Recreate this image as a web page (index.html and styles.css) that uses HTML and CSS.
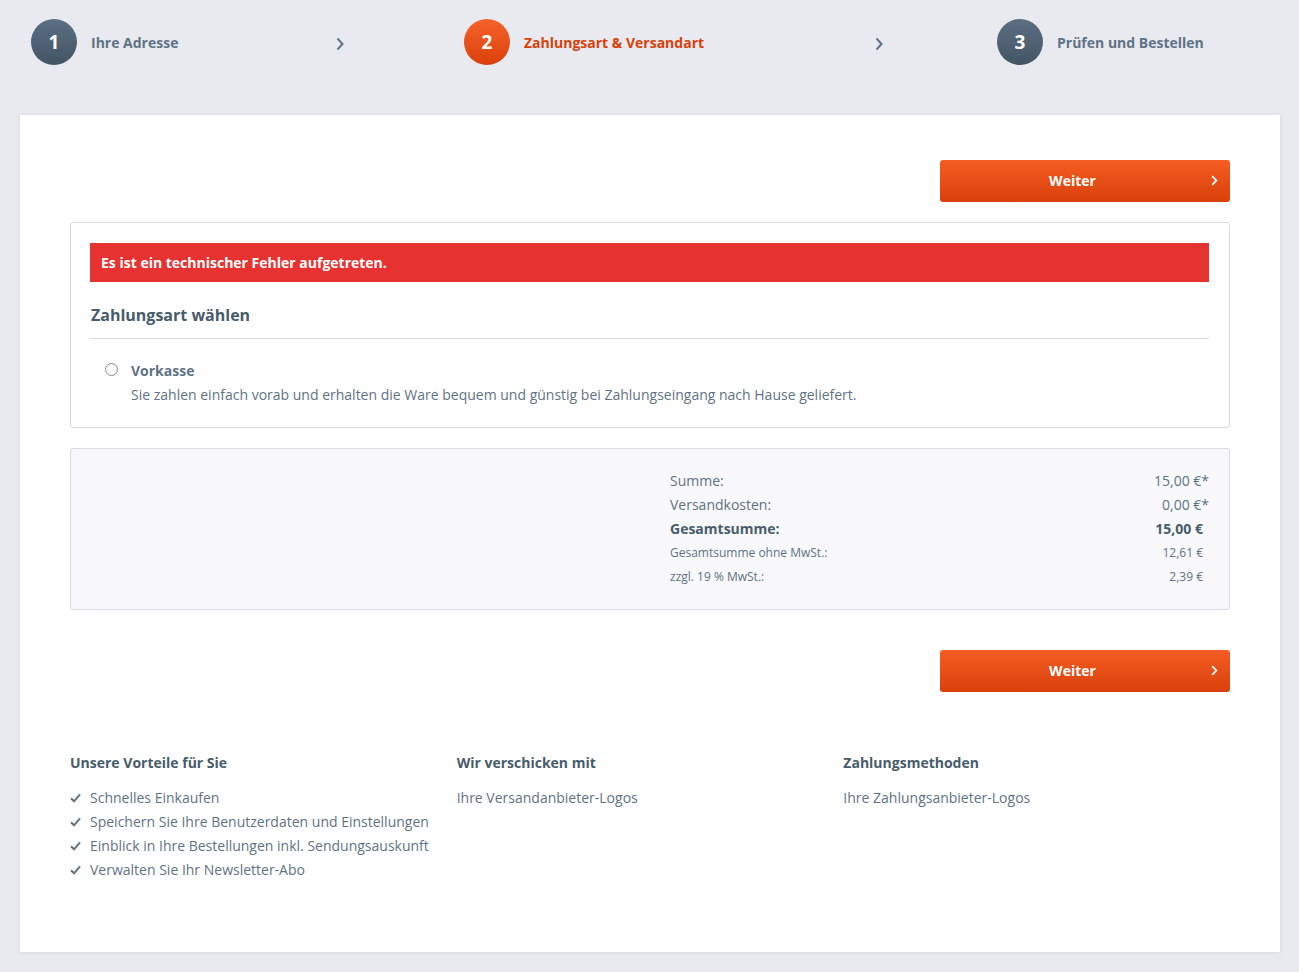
FILE: index.html
```html
<!DOCTYPE html>
<html lang="de">
<head>
<meta charset="utf-8">
<title>Zahlungsart &amp; Versandart</title>
<link rel="stylesheet" href="styles.css">
</head>
<body>
<div class="page">
  <nav class="steps">
    <div class="step step-first">
      <span class="step-counter">1</span>
      <span class="step-label">Ihre Adresse</span>
      <svg class="step-arrow step-arrow-first" width="8" height="14" viewBox="0 0 8 14"><path d="M1.5 1.5 L6.5 7 L1.5 12.5" fill="none" stroke="#5f7285" stroke-width="2"/></svg>
    </div>
    <div class="step step-second step-active">
      <span class="step-counter">2</span>
      <span class="step-label">Zahlungsart &amp; Versandart</span>
      <svg class="step-arrow step-arrow-second" width="8" height="14" viewBox="0 0 8 14"><path d="M1.5 1.5 L6.5 7 L1.5 12.5" fill="none" stroke="#5f7285" stroke-width="2"/></svg>
    </div>
    <div class="step">
      <span class="step-counter">3</span>
      <span class="step-label">Prüfen und Bestellen</span>
    </div>
  </nav>

  <main class="card">
    <div class="actions">
      <button class="btn-primary" type="button">
        <span class="btn-text">Weiter</span>
        <span class="btn-icon"><svg width="7" height="11" viewBox="0 0 7 11"><path d="M1.2 1.2 L5.3 5.5 L1.2 9.8" fill="none" stroke="#fff" stroke-width="1.8"/></svg></span>
      </button>
    </div>

    <section class="panel">
      <div class="alert-error">Es ist ein technischer Fehler aufgetreten.</div>
      <h2 class="panel-title">Zahlungsart wählen</h2>
      <div class="payment-method">
        <input class="radio" type="radio" name="payment" id="vorkasse">
        <div class="payment-body">
          <label class="payment-name" for="vorkasse">Vorkasse</label>
          <p class="payment-desc">Sie zahlen einfach vorab und erhalten die Ware bequem und günstig bei Zahlungseingang nach Hause geliefert.</p>
        </div>
      </div>
    </section>

    <section class="summary">
      <ul class="summary-list">
        <li class="summary-row"><span>Summe:</span><span>15,00&nbsp;€*</span></li>
        <li class="summary-row"><span>Versandkosten:</span><span>0,00&nbsp;€*</span></li>
        <li class="summary-row summary-total"><span>Gesamtsumme:</span><span class="no-star">15,00&nbsp;€</span></li>
        <li class="summary-row summary-small"><span>Gesamtsumme ohne MwSt.:</span><span class="no-star">12,61&nbsp;€</span></li>
        <li class="summary-row summary-small"><span>zzgl. 19 % MwSt.:</span><span class="no-star">2,39&nbsp;€</span></li>
      </ul>
    </section>

    <div class="actions actions-bottom">
      <button class="btn-primary" type="button">
        <span class="btn-text">Weiter</span>
        <span class="btn-icon"><svg width="7" height="11" viewBox="0 0 7 11"><path d="M1.2 1.2 L5.3 5.5 L1.2 9.8" fill="none" stroke="#fff" stroke-width="1.8"/></svg></span>
      </button>
    </div>

    <footer class="benefits">
      <div class="benefit-col">
        <h3 class="benefit-title">Unsere Vorteile für Sie</h3>
        <ul class="check-list">
          <li><svg class="check" width="11" height="10" viewBox="0 0 11 10"><path d="M1 5.3 L4 8.3 L10 1.3" fill="none" stroke="#5f7285" stroke-width="2"/></svg>Schnelles Einkaufen</li>
          <li><svg class="check" width="11" height="10" viewBox="0 0 11 10"><path d="M1 5.3 L4 8.3 L10 1.3" fill="none" stroke="#5f7285" stroke-width="2"/></svg>Speichern Sie Ihre Benutzerdaten und Einstellungen</li>
          <li><svg class="check" width="11" height="10" viewBox="0 0 11 10"><path d="M1 5.3 L4 8.3 L10 1.3" fill="none" stroke="#5f7285" stroke-width="2"/></svg>Einblick in Ihre Bestellungen inkl. Sendungsauskunft</li>
          <li><svg class="check" width="11" height="10" viewBox="0 0 11 10"><path d="M1 5.3 L4 8.3 L10 1.3" fill="none" stroke="#5f7285" stroke-width="2"/></svg>Verwalten Sie Ihr Newsletter-Abo</li>
        </ul>
      </div>
      <div class="benefit-col">
        <h3 class="benefit-title">Wir verschicken mit</h3>
        <p class="benefit-text">Ihre Versandanbieter-Logos</p>
      </div>
      <div class="benefit-col">
        <h3 class="benefit-title">Zahlungsmethoden</h3>
        <p class="benefit-text">Ihre Zahlungsanbieter-Logos</p>
      </div>
    </footer>
  </main>
</div>
</body>
</html>
```

FILE: styles.css
```css
* { box-sizing: border-box; }

html, body {
  margin: 0;
  padding: 0;
}

body {
  background: #e9eaef;
  font-family: "Open Sans", "Liberation Sans", sans-serif;
  font-size: 14px;
  line-height: 24px;
  color: #5f7285;
}

.page {
  padding: 0 19px 19px 20px;
}

/* Steps */
.steps {
  display: flex;
  align-items: center;
  height: 115px;
  padding: 0 0 31px 11px;
}

.step {
  display: flex;
  align-items: center;
}

.step-first { width: 433px; }
.step-second { width: 533px; }

.step-counter {
  width: 46px;
  height: 46px;
  border-radius: 50%;
  background: linear-gradient(#5c6f83, #435464);
  color: #fff;
  font-weight: 700;
  font-size: 19px;
  display: flex;
  align-items: center;
  justify-content: center;
  flex-shrink: 0;
}

.step-label {
  margin: 2px 0 0 14px;
  font-weight: 700;
  font-size: 14px;
  color: #5f7285;
}

.step-active .step-counter {
  background: linear-gradient(#f6622a, #d9400b);
}

.step-active .step-label {
  color: #d9400b;
}

.step-arrow {
  margin-left: auto;
  margin-top: 3px;
}

.step-arrow-first { margin-right: 120px; }
.step-arrow-second { margin-right: 114px; }

/* Card */
.card {
  background: #fff;
  box-shadow: 0 0 4px rgba(80, 90, 130, 0.14);
  padding: 45px 50px 70px 50px;
}

.actions {
  display: flex;
  justify-content: flex-end;
}

.actions-bottom {
  margin-top: 40px;
}

.btn-primary {
  width: 290px;
  height: 42px;
  border: 0;
  border-radius: 3px;
  background: linear-gradient(#f45d23, #d9400b);
  color: #fff;
  font-family: inherit;
  font-weight: 700;
  font-size: 14px;
  line-height: 20px;
  display: flex;
  align-items: center;
  padding: 0 0 1px 11px;
  cursor: pointer;
}

.btn-text {
  flex: 1;
  text-align: center;
}

.btn-icon {
  width: 36px;
  display: flex;
  justify-content: flex-end;
  padding-right: 12px;
}

/* Panel */
.panel {
  margin-top: 20px;
  border: 1px solid #dadae5;
  border-radius: 3px;
  padding: 20px 20px 20px 19px;
}

.alert-error {
  background: #e73232;
  color: #fff;
  font-weight: 700;
  height: 39px;
  line-height: 39px;
  padding-left: 11px;
}

.panel-title {
  margin: 21px 0 0 0;
  font-size: 16px;
  font-weight: 700;
  line-height: 24px;
  color: #475c6a;
  padding: 0 0 11px 1px;
  border-bottom: 1px solid #dadae5;
}

.payment-method {
  display: flex;
  margin-top: 20px;
  padding-left: 15px;
}

.radio {
  appearance: none;
  -webkit-appearance: none;
  width: 13px;
  height: 13px;
  border: 1px solid #8a8a8a;
  border-radius: 50%;
  background: #fff;
  margin: 4px 13px 0 0;
  flex-shrink: 0;
}

.payment-name {
  display: block;
  font-weight: 700;
  color: #5f7285;
}

.payment-desc {
  margin: 0;
}

/* Summary */
.summary {
  margin-top: 20px;
  background: #f8f8fa;
  border: 1px solid #dadae5;
  border-radius: 3px;
  padding: 20px 20px 20px 0;
  display: flex;
  justify-content: flex-end;
}

.summary-list {
  list-style: none;
  margin: 0;
  padding: 0;
  width: 539px;
}

.summary-row {
  display: flex;
  justify-content: space-between;
  height: 24px;
  line-height: 24px;
}

.summary-total {
  font-weight: 700;
  color: #475c6a;
}

.summary-small {
  font-size: 12px;
}

.no-star {
  padding-right: 6px;
}

/* Benefits */
.benefits {
  margin-top: 59px;
  display: grid;
  grid-template-columns: repeat(3, 1fr);
}

.benefit-title {
  margin: 0;
  font-size: 14px;
  font-weight: 700;
  line-height: 24px;
  color: #475c6a;
}

.benefit-text {
  margin: 11px 0 0 0;
}

.check-list {
  list-style: none;
  margin: 11px 0 0 0;
  padding: 0;
}

.check-list li {
  display: flex;
  align-items: center;
}

.check {
  margin-right: 9px;
  flex-shrink: 0;
}
```
